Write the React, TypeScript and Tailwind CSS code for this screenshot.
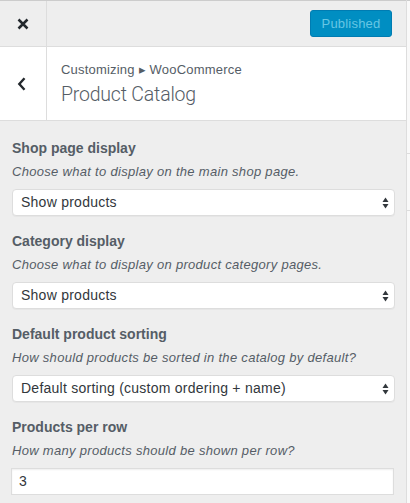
import React from "react";

const Arrows = () => (
  <svg width="7" height="12" viewBox="0 0 7 12" className="shrink-0">
    <path d="M3.5 0.5 L6.5 5 L0.5 5 Z" fill="#32373c" />
    <path d="M3.5 11.5 L6.5 7 L0.5 7 Z" fill="#32373c" />
  </svg>
);

const FakeSelect = ({ value }: { value: string }) => (
  <div className="ml-[12px] mr-[11px] h-[27px] bg-white border border-[#ddd] rounded-[4px] shadow-[0_1px_0_rgba(0,0,0,0.03)] flex items-center justify-between pl-[8px] pr-[5px] text-[14px] tracking-[0.25px] text-[#32373c]">
    <span>{value}</span>
    <Arrows />
  </div>
);

const Section = ({
  title,
  desc,
  children,
}: {
  title: string;
  desc: string;
  children: React.ReactNode;
}) => (
  <div className="mb-[13px] shrink-0">
    <div className="px-[12px] h-[24px] leading-[24px] text-[14px] font-bold text-[#555d66] mb-[3px]">{title}</div>
    <div className="px-[12px] h-[18px] leading-[18px] text-[13px] italic tracking-[0.3px] text-[#555d66] mb-[8px]">{desc}</div>
    {children}
  </div>
);

export default function App() {
  return (
    <div className="flex w-[410px] h-[503px] overflow-hidden bg-white font-['Liberation_Sans',Arial,sans-serif]">
      <div className="w-[407px] shrink-0 bg-[#eee] border-r border-[#ddd] flex flex-col overflow-hidden">
        {/* header */}
        <div className="h-[47px] shrink-0 border-t border-b border-[#ccc] border-b-[#ddd] flex items-stretch">
          <div className="w-[47px] border-r border-[#ddd] flex items-center justify-center">
            <svg width="12" height="12" viewBox="0 0 12 12">
              <path d="M1.5 1.5 L10.5 10.5 M10.5 1.5 L1.5 10.5" stroke="#23282d" strokeWidth="2.5" strokeLinecap="butt" />
            </svg>
          </div>
          <div className="flex-1 flex items-center justify-end pr-[14px]">
            <div className="w-[82px] h-[27px] rounded-[3px] bg-[#008ec2] border border-[#007cb2] flex items-center justify-center text-[13px] tracking-[0.2px] text-[#66c6e4]">
              Published
            </div>
          </div>
        </div>
        {/* title */}
        <div className="h-[74px] shrink-0 bg-white border-b border-[#ddd] flex items-stretch">
          <div className="w-[47px] border-r border-[#ddd] flex items-center justify-center pr-[2px]">
            <svg width="10" height="14" viewBox="0 0 10 14">
              <path d="M7.5 1.2 L2.3 7 L7.5 12.8" stroke="#23282d" strokeWidth="2.4" fill="none" />
            </svg>
          </div>
          <div className="flex-1 pl-[14px] pt-[14px] text-[#555d66]">
            <div className="h-[18px] leading-[18px] text-[13px] tracking-[0.2px]">Customizing ▸ WooCommerce</div>
            <div className="mt-[2px] h-[28px] leading-[28px] text-[19.5px] tracking-[-0.2px] font-['Roboto','Liberation_Sans',sans-serif] font-light">Product Catalog</div>
          </div>
        </div>
        {/* content */}
        <div className="pt-[15px] shrink-0">
          <Section title="Shop page display" desc="Choose what to display on the main shop page.">
            <FakeSelect value="Show products" />
          </Section>
          <Section title="Category display" desc="Choose what to display on product category pages.">
            <FakeSelect value="Show products" />
          </Section>
          <Section title="Default product sorting" desc="How should products be sorted in the catalog by default?">
            <FakeSelect value="Default sorting (custom ordering + name)" />
          </Section>
          <Section title="Products per row" desc="How many products should be shown per row?">
            <div className="ml-[11px] mr-[12px] h-[27px] bg-white border border-[#ddd] shadow-[inset_0_1px_2px_rgba(0,0,0,0.07)] flex items-center pl-[7px] text-[14px] text-[#32373c]">
              3
            </div>
          </Section>
        </div>
      </div>
      <div className="flex-1 bg-[#f9f9f9] border-t border-[#ccc] flex flex-col">
        <div className="h-[152px] shrink-0" />
        <div className="h-px bg-[#ddd] shrink-0" />
        <div className="h-[56px] shrink-0" />
        <div className="h-px bg-[#ddd] shrink-0" />
      </div>
    </div>
  );
}
